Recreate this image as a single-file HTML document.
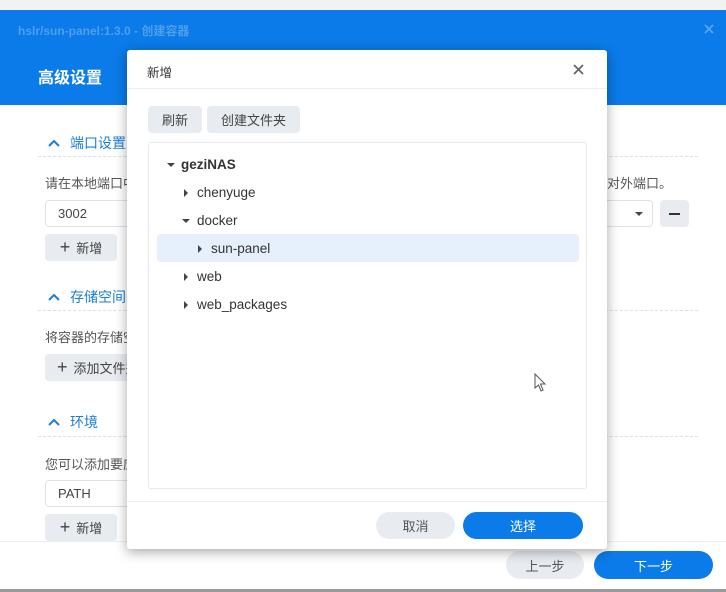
<!DOCTYPE html>
<html><head><meta charset="utf-8"><style>
*{margin:0;padding:0;box-sizing:border-box}
body{width:726px;height:592px;position:relative;overflow:hidden;background:#f2f2f2;font-family:"Liberation Sans","Noto Sans CJK SC",sans-serif;font-size:13px;color:#333}
.abs{position:absolute}
.hdr{left:0;top:10px;width:726px;height:95px;background:#0a7be8}
.main{left:0;top:105px;width:726px;height:484px;background:#fff}
.sec{color:#1a7fd6;font-size:14px;display:flex;align-items:center}
.sec svg{margin-right:10px}
.dash{border-top:1px dashed #dde1e6;left:38px;width:660px;height:0}
.txt{color:#555;font-size:13px}
.btn{background:#e8ecf1;border-radius:4px;color:#444;font-size:13px;display:flex;align-items:center;justify-content:center}
.inp{border:1px solid #dfe3e8;border-radius:4px;background:#fff;color:#444;padding-left:12px;display:flex;align-items:center}
.dlg{left:127px;top:50px;width:480px;height:499px;background:#fff;border-radius:3px;box-shadow:0 3px 12px rgba(0,0,0,.35)}
.pill{border-radius:14px;display:flex;align-items:center;justify-content:center;font-size:13px}
.tri{display:inline-block;width:0;height:0}
.r{border-top:4px solid transparent;border-bottom:4px solid transparent;border-left:4px solid #444}
.d{border-left:4px solid transparent;border-right:4px solid transparent;border-top:4px solid #444}
.node{position:absolute;font-size:13.5px;color:#333;display:flex;align-items:center}
</style></head><body>
<div class="abs hdr"></div>
<div class="abs" style="left:18px;top:22px;color:#4f9fea;font-size:12px;font-weight:bold">hslr/sun-panel:1.3.0 - 创建容器</div>
<svg class="abs" style="left:704px;top:24px" width="10" height="10"><path d="M1 1L9 9M9 1L1 9" stroke="#5aa6ef" stroke-width="1.8"/></svg>
<div class="abs" style="left:38px;top:64px;color:#fff;font-size:16px;font-weight:bold">高级设置</div>
<div class="abs main"></div>

<svg width="0" height="0" style="position:absolute"><defs><path id="chev" d="M1 7L6 2L11 7" fill="none" stroke="#1a7fd6" stroke-width="2"/></defs></svg>
<div class="abs sec" style="left:48px;top:133px"><svg width="12" height="9"><use href="#chev"/></svg>端口设置</div>
<div class="abs dash" style="top:156px"></div>
<div class="abs txt" style="left:45px;top:173px">请在本地端口中</div>
<div class="abs txt" style="left:607px;top:173px">对外端口。</div>
<div class="abs inp" style="left:45px;top:200px;width:100px;height:27px">3002</div>
<div class="abs inp" style="left:600px;top:200px;width:53px;height:27px"><span class="tri d" style="position:absolute;left:34px;top:11px"></span></div>
<div class="abs btn" style="left:660px;top:200px;width:29px;height:27px"><span style="width:11px;height:2px;background:#333;display:block"></span></div>
<div class="abs btn" style="left:45px;top:234px;width:72px;height:27px"><b style="font-size:18px;margin-right:6px;font-weight:normal">+</b>新增</div>

<div class="abs sec" style="left:48px;top:287px"><svg width="12" height="9"><use href="#chev"/></svg>存储空间</div>
<div class="abs dash" style="top:310px"></div>
<div class="abs txt" style="left:45px;top:327px">将容器的存储空间</div>
<div class="abs btn" style="left:45px;top:354px;width:100px;height:27px;justify-content:flex-start;padding-left:12px"><b style="font-size:18px;margin-right:6px;font-weight:normal">+</b>添加文件夹</div>

<div class="abs sec" style="left:48px;top:412px"><svg width="12" height="9"><use href="#chev"/></svg>环境</div>
<div class="abs dash" style="top:436px"></div>
<div class="abs txt" style="left:45px;top:454px">您可以添加要应用</div>
<div class="abs inp" style="left:45px;top:480px;width:100px;height:27px">PATH</div>
<div class="abs btn" style="left:45px;top:514px;width:72px;height:27px"><b style="font-size:18px;margin-right:6px;font-weight:normal">+</b>新增</div>

<div class="abs" style="left:0;top:541px;width:726px;height:48px;background:#fff;border-top:1px solid #eceff2"></div>
<div class="abs pill" style="left:506px;top:551px;width:78px;height:28px;background:#e8ecf1;color:#555">上一步</div>
<div class="abs pill" style="left:594px;top:551px;width:119px;height:28px;background:#0a7be8;color:#fff">下一步</div>
<div class="abs" style="left:0;top:589px;width:726px;height:3px;background:#9a9a9a"></div>

<div class="abs dlg">
 <div class="abs" style="left:20px;top:12px;font-size:12.5px;color:#333">新增</div>
 <svg class="abs" style="left:446px;top:14px" width="11" height="11"><path d="M1 1L10 10M10 1L1 10" stroke="#666" stroke-width="1.8"/></svg>
 <div class="abs" style="left:0;top:38px;width:480px;border-top:1px solid #eceff2"></div>
 <div class="abs btn" style="left:21px;top:56px;width:54px;height:27px">刷新</div>
 <div class="abs btn" style="left:80px;top:56px;width:93px;height:27px">创建文件夹</div>
 <div class="abs" style="left:21px;top:92px;width:439px;height:347px;border:1px solid #e6eaef;border-radius:3px"></div>
 <div class="abs" style="left:30px;top:184px;width:422px;height:28px;background:#e5f0fc;border-radius:4px"></div>
 <div class="node" style="left:40px;top:107px"><span class="tri d" style="margin-right:6px"></span><b>geziNAS</b></div>
 <div class="node" style="left:57px;top:135px"><span class="tri r" style="margin-right:9px"></span>chenyuge</div>
 <div class="node" style="left:55px;top:163px"><span class="tri d" style="margin-right:7px"></span>docker</div>
 <div class="node" style="left:71px;top:191px"><span class="tri r" style="margin-right:9px"></span>sun-panel</div>
 <div class="node" style="left:57px;top:219px"><span class="tri r" style="margin-right:9px"></span>web</div>
 <div class="node" style="left:57px;top:247px"><span class="tri r" style="margin-right:9px"></span>web_packages</div>
 <div class="abs" style="left:0;top:451px;width:480px;border-top:1px solid #eceff2"></div>
 <div class="abs pill" style="left:249px;top:462px;width:79px;height:27px;background:#e8ecf1;color:#555">取消</div>
 <div class="abs pill" style="left:336px;top:462px;width:120px;height:27px;background:#0a7be8;color:#fff">选择</div>
 <svg class="abs" style="left:407px;top:323px" width="14" height="20" viewBox="0 0 14 20"><path d="M1 1 L1 15 L4.5 12 L7 18 L9 17 L6.5 11 L11 11 Z" fill="#fff" stroke="#555" stroke-width="1"/></svg>
</div>
</body></html>
